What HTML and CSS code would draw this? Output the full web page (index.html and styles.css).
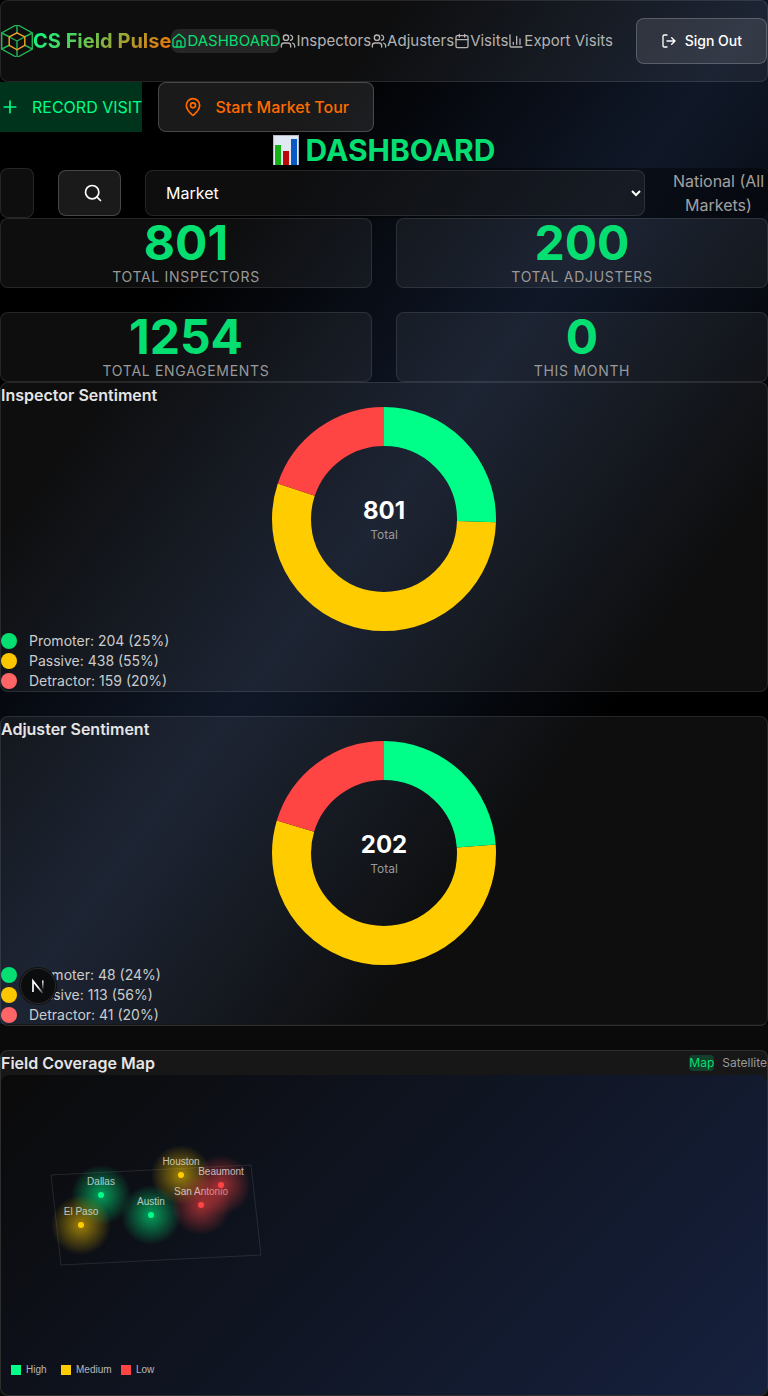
FILE: index.html
```html
<!DOCTYPE html>
<html lang="en">
<head>
<meta charset="utf-8">
<meta name="viewport" content="width=device-width, initial-scale=1">
<title>CS Field Pulse</title>
<link rel="stylesheet" href="styles.css">
</head>
<body>
<div class="page">
  <header class="topbar card">
    <svg class="logo" viewBox="0 0 32 32" fill="none" aria-hidden="true">
      <g stroke="#22b455" stroke-width="1.400"><path d="M16-.5 31.300 8v16L16 32.500.700 24V8z"/><path d="M16 0v8M.7 8l8 4M31.300 8l-8 4M.7 24l8-4M31.300 24l-8-4M16 32v-7"/><path d="M16 16v8M16 16l-7.500-4M16 16l7.500-4"/></g>
      <path d="m16 7.800 7.800 4.200v8.300L16 24.800l-7.800-4.500V12z" stroke="#f5a524" stroke-width="1.400"/>
    </svg>
    <span class="brand">CS Field Pulse</span>
    <nav class="nav">
      <a class="nav-link active" href="#"><svg class="icon" viewBox="0 0 24 24"><path d="M15 21v-8a1 1 0 0 0-1-1h-4a1 1 0 0 0-1 1v8"/><path d="M3 10a2 2 0 0 1 .709-1.528l7-6a2 2 0 0 1 2.582 0l7 6A2 2 0 0 1 21 10v9a2 2 0 0 1-2 2H5a2 2 0 0 1-2-2z"/></svg>DASHBOARD</a>
      <a class="nav-link" href="#"><svg class="icon" viewBox="0 0 24 24"><path d="M16 21v-2a4 4 0 0 0-4-4H6a4 4 0 0 0-4 4v2M16 3.128a4 4 0 0 1 0 7.744M22 21v-2a4 4 0 0 0-3-3.870"/><circle cx="9" cy="7" r="4"/></svg>Inspectors</a>
      <a class="nav-link" href="#"><svg class="icon" viewBox="0 0 24 24"><path d="M16 21v-2a4 4 0 0 0-4-4H6a4 4 0 0 0-4 4v2M16 3.128a4 4 0 0 1 0 7.744M22 21v-2a4 4 0 0 0-3-3.870"/><circle cx="9" cy="7" r="4"/></svg>Adjusters</a>
      <a class="nav-link" href="#"><svg class="icon" viewBox="0 0 24 24"><path d="M8 2v4M16 2v4M3 10h18"/><rect x="3" y="4" width="18" height="18" rx="2"/></svg>Visits</a>
      <a class="nav-link" href="#"><svg class="icon" viewBox="0 0 24 24"><path d="M3 3v16a2 2 0 0 0 2 2h16M8 17v-3M13 17V5M18 17V9"/></svg>Export Visits</a>
    </nav>
    <button class="button sign-out" type="button"><svg class="icon" viewBox="0 0 24 24"><path d="m16 17 5-5-5-5M21 12H9M9 21H5a2 2 0 0 1-2-2V5a2 2 0 0 1 2-2h4"/></svg>Sign Out</button>
  </header>

  <div class="actions">
    <button class="record" type="button"><svg class="icon large" viewBox="0 0 24 24"><path d="M5 12h14M12 5v14"/></svg>RECORD VISIT</button>
    <button class="button tour" type="button"><svg class="icon large" viewBox="0 0 24 24"><path d="M20 10c0 4.993-5.539 10.193-7.399 11.799a1 1 0 0 1-1.202 0C9.539 20.193 4 14.993 4 10a8 8 0 0 1 16 0"/><circle cx="12" cy="10" r="3"/></svg>Start Market Tour</button>
  </div>

  <main>
    <h1 class="title">
      <svg class="title-icon" viewBox="0 0 26 30" aria-hidden="true">
        <path d="M0 0h26v30H0z" fill="#b4bac4"/><path d="M1 1h24v29H1z" fill="#dfe8f3"/>
        <path d="M2 10h6v20H2z" fill="#12b312"/><path d="M10 16h6v14h-6z" fill="#b80a0a"/><path d="M18 4h6v26h-6z" fill="#0a58c4"/>
      </svg>
      DASHBOARD
    </h1>

    <form class="filters">
      <input class="card search-input" type="text" aria-label="Search">
      <button class="button search-button" type="button" aria-label="Search"><svg class="icon large" viewBox="0 0 24 24"><circle cx="11" cy="11" r="8"/><path d="m21 21-4.340-4.340"/></svg></button>
      <select class="card market" aria-label="Market"><option>Market</option></select>
      <span class="scope">National (All Markets)</span>
    </form>

    <section class="stats">
      <div class="card stat"><strong>801</strong><span>TOTAL INSPECTORS</span></div>
      <div class="card stat"><strong>200</strong><span>TOTAL ADJUSTERS</span></div>
      <div class="card stat"><strong>1254</strong><span>TOTAL ENGAGEMENTS</span></div>
      <div class="card stat"><strong>0</strong><span>THIS MONTH</span></div>
    </section>

    <div class="panels">
      <section class="card panel">
        <h2>Inspector Sentiment</h2>
        <div class="chart">
          <svg class="donut" viewBox="0 0 224 224" aria-hidden="true">
            <circle class="passive" cx="112" cy="112" r="92.500" pathLength="801" stroke-dasharray="438 363" stroke-dashoffset="-204"/>
            <circle class="promoter" cx="112" cy="112" r="92.500" pathLength="801" stroke-dasharray="204 597"/>
            <circle class="detractor" cx="112" cy="112" r="92.500" pathLength="801" stroke-dasharray="159 642" stroke-dashoffset="-642"/>
          </svg>
          <div class="total"><strong>801</strong><span>Total</span></div>
        </div>
        <ul class="legend">
          <li><i class="dot green"></i>Promoter: 204 (25%)</li>
          <li><i class="dot yellow"></i>Passive: 438 (55%)</li>
          <li><i class="dot red"></i>Detractor: 159 (20%)</li>
        </ul>
      </section>

      <section class="card panel">
        <h2>Adjuster Sentiment</h2>
        <div class="chart">
          <svg class="donut" viewBox="0 0 224 224" aria-hidden="true">
            <circle class="passive" cx="112" cy="112" r="92.500" pathLength="202" stroke-dasharray="113 89" stroke-dashoffset="-48"/>
            <circle class="promoter" cx="112" cy="112" r="92.500" pathLength="202" stroke-dasharray="48 154"/>
            <circle class="detractor" cx="112" cy="112" r="92.500" pathLength="202" stroke-dasharray="41 161" stroke-dashoffset="-161"/>
          </svg>
          <div class="total"><strong>202</strong><span>Total</span></div>
        </div>
        <ul class="legend">
          <li><i class="dot green"></i>Promoter: 48 (24%)</li>
          <li><i class="dot yellow"></i>Passive: 113 (56%)</li>
          <li><i class="dot red"></i>Detractor: 41 (20%)</li>
        </ul>
        <button class="dev-badge" type="button" aria-label="Developer tools">
          <svg viewBox="0 0 36 36" fill="none" aria-hidden="true">
            <defs>
              <linearGradient id="slant" gradientUnits="userSpaceOnUse" x1="18" y1="19" x2="24" y2="26"><stop stop-color="#fff"/><stop offset="1" stop-color="#fff" stop-opacity="0"/></linearGradient>
              <linearGradient id="stem" gradientUnits="userSpaceOnUse" x1="22" y1="12" x2="22" y2="22"><stop stop-color="#fff"/><stop offset="1" stop-color="#fff" stop-opacity="0"/></linearGradient>
            </defs>
            <path d="M13 24V13l9.500 12" stroke="url(#slant)" stroke-width="1.700"/>
            <path d="M22.800 12.500V22" stroke="url(#stem)" stroke-width="1.600"/>
          </svg>
        </button>
      </section>

      <section class="card panel">
        <div class="panel-head">
          <h2>Field Coverage Map</h2>
          <div class="map-modes"><button class="mode selected" type="button">Map</button><button class="mode" type="button">Satellite</button></div>
        </div>
        <div class="map">
          <svg class="map-drawing" width="280" height="320" viewBox="0 0 280 320" role="img" aria-label="Field coverage by city">
            <defs>
              <radialGradient id="high"><stop stop-color="#00ff88" stop-opacity=".6"/><stop offset="1" stop-color="#00ff88" stop-opacity="0"/></radialGradient>
              <radialGradient id="medium"><stop stop-color="#ffcc00" stop-opacity=".6"/><stop offset="1" stop-color="#ffcc00" stop-opacity="0"/></radialGradient>
              <radialGradient id="low"><stop stop-color="#ff4444" stop-opacity=".6"/><stop offset="1" stop-color="#ff4444" stop-opacity="0"/></radialGradient>
            </defs>
            <path class="region" d="m50 100 200-10 10 90-200 10z"/>
            <g class="cities">
              <circle cx="180" cy="100" r="30" fill="url(#medium)"/><circle cx="180" cy="100" r="3" fill="#fc0"/><text x="180" y="90">Houston</text>
              <circle cx="100" cy="120" r="30" fill="url(#high)"/><circle cx="100" cy="120" r="3" fill="#0f8"/><text x="100" y="110">Dallas</text>
              <circle cx="150" cy="140" r="30" fill="url(#high)"/><circle cx="150" cy="140" r="3" fill="#0f8"/><text x="150" y="130">Austin</text>
              <circle cx="200" cy="130" r="30" fill="url(#low)"/><circle cx="200" cy="130" r="3" fill="#f44"/><text x="200" y="120">San Antonio</text>
              <circle cx="80" cy="150" r="30" fill="url(#medium)"/><circle cx="80" cy="150" r="3" fill="#fc0"/><text x="80" y="140">El Paso</text>
              <circle cx="220" cy="110" r="30" fill="url(#low)"/><circle cx="220" cy="110" r="3" fill="#f44"/><text x="220" y="100">Beaumont</text>
            </g>
            <g class="keys">
              <path d="M10 290h10v10H10z" fill="#0f8"/><text x="25" y="298">High</text>
              <path d="M60 290h10v10H60z" fill="#fc0"/><text x="75" y="298">Medium</text>
              <path d="M120 290h10v10h-10z" fill="#f44"/><text x="135" y="298">Low</text>
            </g>
          </svg>
        </div>
      </section>
    </div>
  </main>
</div>
</body>
</html>
```
FILE: styles.css
```css
* { box-sizing: border-box; }

body {
  margin: 0;
  background: #0a0a0a;
  color: #fff;
  font: 16px/24px Inter, "Liberation Sans", sans-serif;
}

.page {
  background: linear-gradient(to bottom right, #000 25%, #101828 50%, #000 75%) 0 0 / 100% 1024px no-repeat;
}

h1, h2, ul { margin: 0; padding: 0; }
button, input, select { font: inherit; color: inherit; margin: 0; }
button { cursor: pointer; }

.card {
  background: rgba(255, 255, 255, .055);
  border: 1px solid rgba(255, 255, 255, .1);
  border-radius: 8px;
}

.icon {
  width: 16px;
  height: 16px;
  flex: none;
  fill: none;
  stroke: currentColor;
  stroke-width: 2;
  stroke-linecap: round;
  stroke-linejoin: round;
}
.icon.large { width: 20px; height: 20px; }

.topbar { display: flex; align-items: center; padding: 17px 0; }
.logo { width: 32px; height: 32px; flex: none; }
.brand {
  font-size: 20px;
  line-height: 28px;
  font-weight: 700;
  white-space: nowrap;
  color: transparent;
  background: linear-gradient(135deg, #00ff88, #ff6b00);
  -webkit-background-clip: text;
  background-clip: text;
}
.nav { display: flex; font-size: 15px; }
.nav-link {
  display: flex;
  align-items: center;
  color: #b3b3b3;
  text-decoration: none;
  white-space: nowrap;
  border-radius: 8px;
}
.nav-link.active { color: #05df72; background: rgba(255, 255, 255, .1); }

.button {
  display: flex;
  align-items: center;
  justify-content: center;
  padding: 12px 24px;
  color: #fff;
  background: rgba(255, 255, 255, .1);
  border: 1px solid rgba(255, 255, 255, .2);
  border-radius: 8px;
  white-space: nowrap;
}
.sign-out { gap: 8px; margin-left: auto; font-size: 14px; line-height: 20px; font-weight: 500; }

.actions { display: flex; gap: 16px; }
.record {
  display: flex;
  align-items: center;
  gap: 12px;
  padding: 0;
  border: 0;
  color: #00ff88;
  background: #00331b;
  white-space: nowrap;
}
.tour { gap: 12px; color: #ff6b00; font-weight: 500; }

.title {
  display: flex;
  align-items: center;
  justify-content: center;
  gap: 7px;
  color: #05df72;
  font-size: 30px;
  line-height: 36px;
  font-weight: 700;
}
.title-icon { width: 26px; height: 30px; }

.filters {
  display: flex;
  align-items: center;
  gap: 24px;
  background: rgba(0, 0, 0, .4);
  border-radius: 8px;
}
.search-input { width: 34px; height: 50px; padding: 12px 16px; }
.search-button { height: 46px; padding: 12px 17px 12px 24px; }
.market { flex: 1; min-width: 0; height: 46px; padding: 0 0 0 16px; color: #fff; }
.market option { color: #000; }
.scope { width: 99px; color: #a1a1a1; text-align: center; }

.stats { display: grid; grid-template-columns: 1fr 1fr; gap: 24px; }
.stat { text-align: center; }
.stat strong { display: block; color: #05df72; font-size: 48px; line-height: 48px; font-weight: 700; }
.stat span { display: block; color: #999; font-size: 14px; line-height: 20px; letter-spacing: .05em; }

.panels { display: grid; gap: 24px; }
.panel { position: relative; min-width: 0; }
h2 { color: #e5e5e5; font-size: 16px; line-height: 24px; font-weight: 600; }

.chart { display: grid; place-items: center; }
.chart > * { grid-area: 1 / 1; }
.donut { width: 224px; height: 224px; transform: rotate(-90deg); fill: none; stroke-width: 39; }
.promoter { stroke: #00ff88; }
.passive { stroke: #ffcc00; }
.detractor { stroke: #ff4444; }
.total { text-align: center; }
.total strong { display: block; font-size: 24px; line-height: 32px; }
.total span { display: block; color: #999; font-size: 12px; line-height: 16px; }

.legend { list-style: none; color: #ccc; font-size: 14px; line-height: 20px; }
.legend li { display: flex; align-items: center; gap: 12px; }
.dot { width: 16px; height: 16px; border-radius: 50%; }
.green { background: #05df72; }
.yellow { background: #fdc700; }
.red { background: #ff6467; }

.dev-badge {
  position: absolute;
  left: 19px;
  bottom: 21px;
  width: 36px;
  height: 36px;
  padding: 0;
  border: 0;
  border-radius: 50%;
  background: #0b0c0e;
  box-shadow: inset 0 0 0 1px #2a2a2a, 0 0 0 1px #101010;
}
.dev-badge svg { display: block; }

.panel-head { display: flex; align-items: center; justify-content: space-between; }
.map-modes { display: flex; gap: 8px; }
.mode {
  padding: 0;
  border: 0;
  border-radius: 4px;
  background: none;
  color: #999;
  font-size: 12px;
  line-height: 16px;
}
.mode.selected { color: #05df72; background: #12402a; }
.map { background: linear-gradient(135deg, #0a0a0a, #16213e); border-radius: 8px; overflow: hidden; }
.map-drawing { display: block; font: 10px "Liberation Sans", Arial, sans-serif; }
.region { fill: none; stroke: rgba(255, 255, 255, .1); }
.cities { fill: rgba(255, 255, 255, .7); text-anchor: middle; }
.keys { fill: rgba(255, 255, 255, .7); }
```
